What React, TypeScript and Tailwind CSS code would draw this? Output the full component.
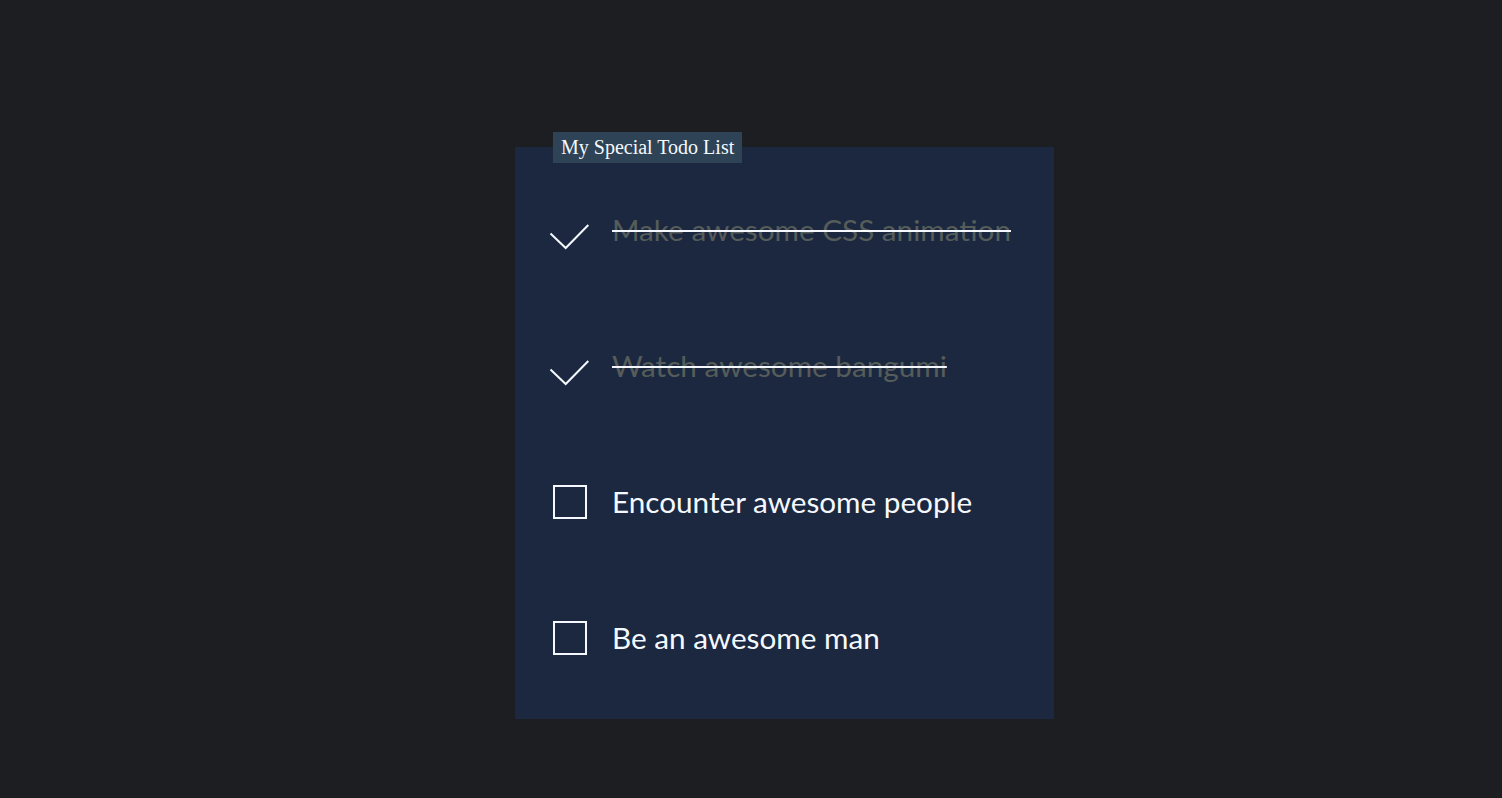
import React from 'react';

type Todo = { text: string; done: boolean };

const todos: Todo[] = [
  { text: 'Make awesome CSS animation', done: true },
  { text: 'Watch awesome bangumi', done: true },
  { text: 'Encounter awesome people', done: false },
  { text: 'Be an awesome man', done: false },
];

const Check = ({ done }: { done: boolean }) => (
  <div className="relative w-[34px] h-[34px] shrink-0">
    {done ? (
      <svg className="absolute inset-0 overflow-visible" width="34" height="34" viewBox="0 0 34 34">
        <polyline points="-2.5,20.5 12.7,35 35.3,12" fill="none" stroke="#f5f9ff" strokeWidth="2" />
      </svg>
    ) : (
      <div className="w-full h-full border-2 border-[#f5f9ff]" />
    )}
  </div>
);

const App = () => {
  return (
    <div className="min-h-screen bg-[#1c1e22] pt-[147px] font-['Lato','Noto_Sans',sans-serif]">
      <div className="relative ml-[515px] w-[539px] h-[572px] bg-[#1b2840] pt-[15px]">
        <div className="absolute left-[38px] top-[-15px] h-[31px] px-[8px] bg-[#2e4356] text-[#f5f9ff] text-[20px] leading-[31px] font-['Liberation_Serif',serif]">
          My Special Todo List
        </div>
        <ul className="flex flex-col pl-[38px]">
          {todos.map((todo) => (
            <li key={todo.text} className="h-[136px] flex items-center gap-[25px]">
              <Check done={todo.done} />
              <span
                className={
                  todo.done
                    ? 'text-[29.7px] leading-none text-[#565c59] line-through decoration-[#f5f9ff] decoration-[1.5px]'
                    : 'text-[29.7px] leading-none text-[#f5f9ff]'
                }
              >
                {todo.text}
              </span>
            </li>
          ))}
        </ul>
      </div>
    </div>
  );
};

export default App;
